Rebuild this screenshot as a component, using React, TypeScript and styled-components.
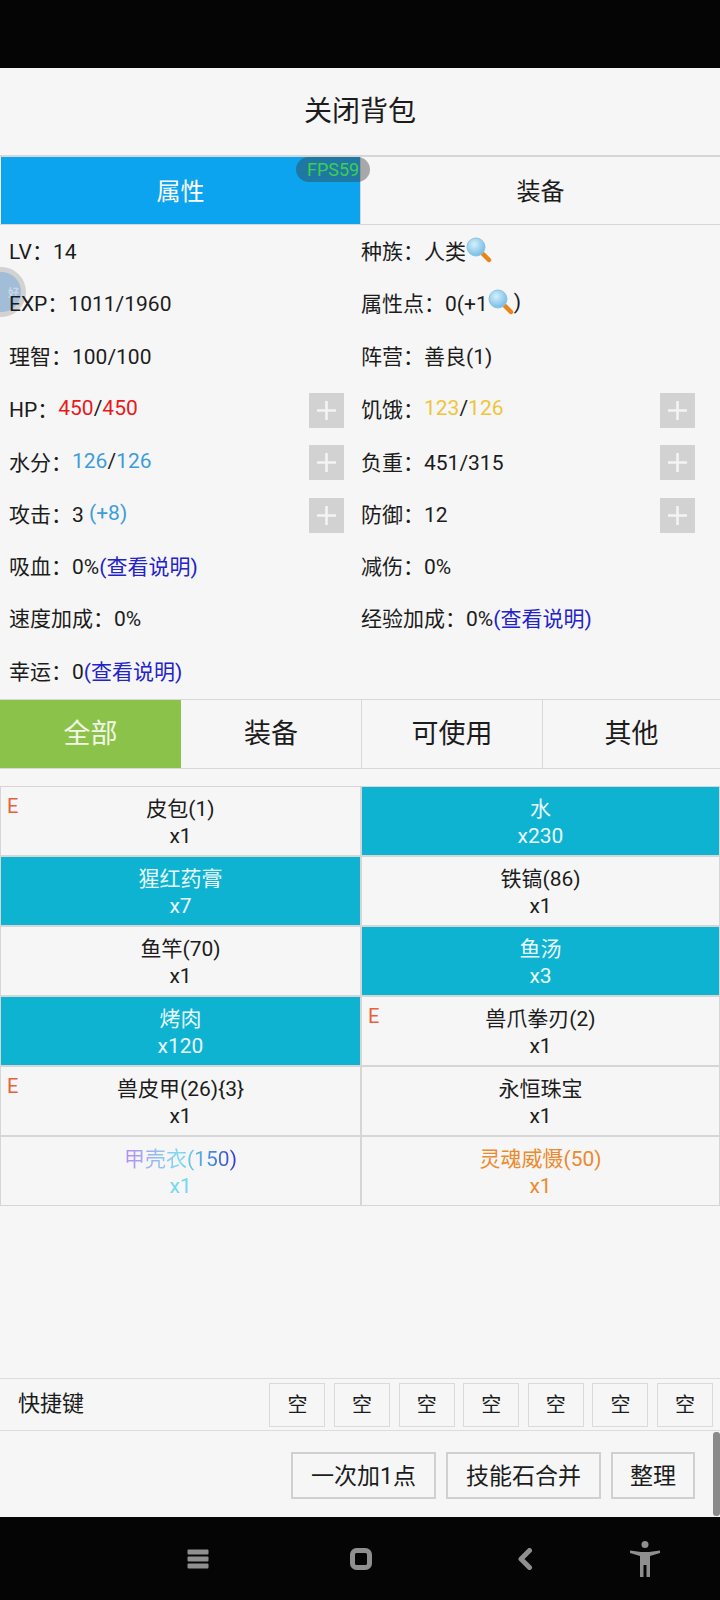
import React from 'react';
import styled, { createGlobalStyle } from 'styled-components';

const GlobalStyle = createGlobalStyle`
  html, body {
    margin: 0;
    padding: 0;
    background: #000;
  }
  * {
    box-sizing: border-box;
  }
`;

const Page = styled.div`
  position: relative;
  width: 720px;
  height: 1600px;
  display: flex;
  flex-direction: column;
  overflow: hidden;
  background: #f6f6f6;
  color: #1c1c1c;
  font-family: Roboto, 'Noto Sans CJK SC', sans-serif;
  font-size: 21px;
`;

const BlackBar = styled.div<{ $height: number }>`
  flex: none;
  height: ${props => props.$height}px;
  background: #050505;
`;

const NavBar = styled(BlackBar)`
  display: flex;
  align-items: center;
  color: #8f8f8f;
`;

const NavIcon = styled.svg<{ $left: number }>`
  flex: none;
  margin-left: ${props => props.$left}px;
`;

const Main = styled.div`
  position: relative;
  z-index: 1;
  flex: 1;
  display: flex;
  flex-direction: column;
  min-height: 0;
`;

const Title = styled.div`
  height: 87px;
  display: flex;
  align-items: center;
  justify-content: center;
  font-size: 28px;
  padding-bottom: 5px;
`;

const TopTabs = styled.div`
  display: grid;
  grid-template-columns: 360px 360px;
  height: 70px;
  border-top: 2px solid #d6d6d6;
  border-bottom: 1px solid #d6d6d6;
`;

const TopTab = styled.div<{ $active?: boolean }>`
  display: flex;
  align-items: center;
  justify-content: center;
  font-size: 24px;
  padding-bottom: 2px;
  color: ${props => (props.$active ? '#fff' : '#1c1c1c')};
  background: ${props => (props.$active ? '#0ca4ee' : 'transparent')};
  margin-left: ${props => (props.$active ? '1px' : '0')};
  border-left: ${props => (props.$active ? 'none' : '1px solid #d6d6d6')};
`;

const Stats = styled.div`
  display: grid;
  grid-template-columns: 352px 1fr;
  grid-auto-rows: 52.5px;
  padding-left: 9px;
  height: 474px;
`;

const Stat = styled.div`
  display: flex;
  align-items: center;
  justify-content: space-between;
  padding-right: 17px;
  &:nth-child(even) {
    padding-right: 25px;
  }
`;

const StatText = styled.span<{ $plus?: boolean }>`
  display: inline-flex;
  align-items: center;
  white-space: pre;
  padding-bottom: ${props => (props.$plus ? '1px' : '3px')};
`;

const Tone = styled.span<{ $color: string }>`
  color: ${props => props.$color};
`;

const PlusButton = styled.div`
  width: 35px;
  height: 35px;
  margin-top: 3px;
  background: #d2d2d2;
  color: #f4f4f4;
  display: flex;
  align-items: center;
  justify-content: center;
`;

const FilterTabs = styled.div`
  display: grid;
  grid-template-columns: 181px 180px 181px 178px;
  height: 70px;
  border-top: 1px solid #d8d8d8;
  border-bottom: 1px solid #d8d8d8;
`;

const FilterTab = styled.div<{ $active?: boolean }>`
  display: flex;
  align-items: center;
  justify-content: center;
  font-size: 27px;
  padding-bottom: 5px;
  color: ${props => (props.$active ? '#f2f7e8' : '#1c1c1c')};
  background: ${props => (props.$active ? '#8bc34a' : 'transparent')};
  border-left: ${props => (props.$active ? 'none' : '1px solid #d8d8d8')};
  &:nth-child(2) {
    border-left: none;
  }
`;

const Items = styled.div`
  margin-top: 17px;
  display: grid;
  grid-template-columns: 361px 359px;
  grid-auto-rows: 70px;
`;

const Item = styled.div<{ $filled?: boolean }>`
  position: relative;
  display: flex;
  flex-direction: column;
  align-items: center;
  justify-content: center;
  line-height: 27px;
  padding-top: 3px;
  border: 1px solid #d6d6d6;
  color: ${props => (props.$filled ? '#eafaff' : '#1c1c1c')};
  background: ${props => (props.$filled ? '#0db3d1' : 'transparent')};
`;

const EquipMark = styled.span`
  position: absolute;
  left: 6px;
  top: 6px;
  color: #e8603a;
  font-size: 20px;
  line-height: 27px;
`;

const GradientName = styled.span`
  background: linear-gradient(90deg, #b48cf0 0%, #7fdcf0 50%, #4a9fe0 72%, #3a3ad0 100%);
  -webkit-background-clip: text;
  background-clip: text;
  color: transparent;
`;

const CyanCount = styled.span`
  color: #75d8f0;
`;

const OrangeText = styled.span`
  color: #ec8a2e;
`;

const Spacer = styled.div`
  flex: 1;
`;

const ShortcutBar = styled.div`
  height: 53px;
  border-top: 1px solid #dcdcdc;
  border-bottom: 1px solid #dcdcdc;
  display: flex;
  align-items: center;
  padding: 0 7px 0 18px;
`;

const ShortcutLabel = styled.div`
  font-size: 22px;
  margin-right: auto;
  padding-bottom: 8px;
`;

const Slots = styled.div`
  display: flex;
  gap: 8.6px;
`;

const Slot = styled.div`
  width: 56px;
  height: 44px;
  border: 1px solid #dadada;
  font-size: 20px;
  padding-bottom: 2px;
  display: flex;
  align-items: center;
  justify-content: center;
`;

const Actions = styled.div`
  height: 86px;
  display: flex;
  justify-content: flex-end;
  align-items: flex-start;
  gap: 10px;
  padding: 21px 25px 0 0;
`;

const ActionButton = styled.div<{ $width: number }>`
  width: ${props => props.$width}px;
  height: 47px;
  border: 2px solid #d0d0d0;
  display: flex;
  align-items: center;
  justify-content: center;
  font-size: 23px;
  padding-bottom: 3px;
`;

const ScrollThumb = styled.div`
  position: absolute;
  z-index: 2;
  right: 0;
  top: 1432px;
  width: 7px;
  height: 84px;
  border-radius: 3px;
  background: #8a8a8a;
`;

const FpsBadge = styled.div`
  position: absolute;
  z-index: 2;
  left: 296px;
  top: 157px;
  width: 74px;
  height: 25px;
  padding-left: 11px;
  border-radius: 13px;
  background: rgba(60, 60, 60, 0.42);
  color: #3ccf4e;
  font-size: 18px;
  line-height: 25px;
`;

const FloatBall = styled.div`
  position: absolute;
  left: -24px;
  top: 267px;
  width: 50px;
  height: 50px;
  padding-right: 2px;
  border-radius: 50%;
  border: 5px solid #d2d2d2;
  background: #a2bdd8;
  color: #c8d8e8;
  font-size: 11px;
  font-weight: 700;
  display: flex;
  align-items: center;
  justify-content: flex-end;
`;

const Magnifier = () => (
  <svg width="26" height="26" viewBox="0 0 26 26">
    <defs>
      <radialGradient id="lens" cx="0.4" cy="0.35" r="0.7">
        <stop offset="0" stopColor="#d4f0fa" />
        <stop offset="1" stopColor="#6fb9e6" />
      </radialGradient>
    </defs>
    <line x1="15" y1="15" x2="23" y2="23" stroke="#e8841a" strokeWidth="4.5" strokeLinecap="round" />
    <circle cx="10" cy="10" r="9" fill="url(#lens)" stroke="#8cc4e2" strokeWidth="1" />
  </svg>
);

const Plus = () => (
  <svg width="21" height="21" viewBox="0 0 21 21">
    <path d="M10.5 1v19M1 10.5h19" stroke="currentColor" strokeWidth="2.6" />
  </svg>
);

const Link = styled.span`
  color: #2323c8;
`;

type ItemData = {
  name: React.ReactNode;
  count: React.ReactNode;
  filled?: boolean;
  equipped?: boolean;
};

const items: ItemData[] = [
  { name: '皮包(1)', count: 'x1', equipped: true },
  { name: '水', count: 'x230', filled: true },
  { name: '猩红药膏', count: 'x7', filled: true },
  { name: '铁镐(86)', count: 'x1' },
  { name: '鱼竿(70)', count: 'x1' },
  { name: '鱼汤', count: 'x3', filled: true },
  { name: '烤肉', count: 'x120', filled: true },
  { name: '兽爪拳刃(2)', count: 'x1', equipped: true },
  { name: '兽皮甲(26){3}', count: 'x1', equipped: true },
  { name: '永恒珠宝', count: 'x1' },
  { name: <GradientName>甲壳衣(150)</GradientName>, count: <CyanCount>x1</CyanCount> },
  { name: <OrangeText>灵魂威慑(50)</OrangeText>, count: <OrangeText>x1</OrangeText> },
];

const RED = '#e8191c';
const YELLOW = '#f0c53c';
const BLUE = '#3d9ddc';

const stats: { text: React.ReactNode; plus?: boolean }[] = [
  { text: 'LV：14' },
  { text: <>种族：人类<Magnifier /></> },
  { text: 'EXP：1011/1960' },
  { text: <>属性点：0(+1<Magnifier />)</> },
  { text: '理智：100/100' },
  { text: '阵营：善良(1)' },
  { text: <>HP：<Tone $color={RED}>450</Tone>/<Tone $color={RED}>450</Tone></>, plus: true },
  { text: <>饥饿：<Tone $color={YELLOW}>123</Tone>/<Tone $color={YELLOW}>126</Tone></>, plus: true },
  { text: <>水分：<Tone $color={BLUE}>126</Tone>/<Tone $color={BLUE}>126</Tone></>, plus: true },
  { text: '负重：451/315', plus: true },
  { text: <>攻击：3 <Tone $color={BLUE}>(+8)</Tone></>, plus: true },
  { text: '防御：12', plus: true },
  { text: <>吸血：0%<Link>(查看说明)</Link></> },
  { text: '减伤：0%' },
  { text: '速度加成：0%' },
  { text: <>经验加成：0%<Link>(查看说明)</Link></> },
  { text: <>幸运：0<Link>(查看说明)</Link></> },
];

export default function App() {
  return (
    <Page>
      <GlobalStyle />
      <BlackBar $height={68} />
      <Main>
        <Title>关闭背包</Title>
        <TopTabs>
          <TopTab $active>属性</TopTab>
          <TopTab>装备</TopTab>
        </TopTabs>
        <Stats>
          {stats.map((stat, i) => (
            <Stat key={i}>
              <StatText $plus={stat.plus}>{stat.text}</StatText>
              {stat.plus && (
                <PlusButton>
                  <Plus />
                </PlusButton>
              )}
            </Stat>
          ))}
        </Stats>
        <FilterTabs>
          <FilterTab $active>全部</FilterTab>
          <FilterTab>装备</FilterTab>
          <FilterTab>可使用</FilterTab>
          <FilterTab>其他</FilterTab>
        </FilterTabs>
        <Items>
          {items.map((item, i) => (
            <Item key={i} $filled={item.filled}>
              {item.equipped && <EquipMark>E</EquipMark>}
              <span>{item.name}</span>
              <span>{item.count}</span>
            </Item>
          ))}
        </Items>
        <Spacer />
        <ShortcutBar>
          <ShortcutLabel>快捷键</ShortcutLabel>
          <Slots>
            {Array.from({ length: 7 }, (_, i) => (
              <Slot key={i}>空</Slot>
            ))}
          </Slots>
        </ShortcutBar>
        <Actions>
          <ActionButton $width={145}>一次加1点</ActionButton>
          <ActionButton $width={155}>技能石合并</ActionButton>
          <ActionButton $width={84}>整理</ActionButton>
        </Actions>
      </Main>
      <NavBar $height={83}>
        <NavIcon $left={187} width="22" height="20" viewBox="0 0 22 20">
          <rect x="0.5" y="0.5" width="21" height="5" rx="1" fill="currentColor" />
          <rect x="0.5" y="7.5" width="21" height="5" rx="1" fill="currentColor" />
          <rect x="0.5" y="14.5" width="21" height="5" rx="1" fill="currentColor" />
        </NavIcon>
        <NavIcon $left={141} width="22" height="22" viewBox="0 0 22 22">
          <rect x="2.500" y="2.500" width="17" height="17" rx="4" fill="none" stroke="currentColor" strokeWidth="5" />
        </NavIcon>
        <NavIcon $left={145} width="16" height="22" viewBox="0 0 16 22">
          <path d="M12.5 2.500L4 11l8.500 8.500" fill="none" stroke="currentColor" strokeWidth="5" strokeLinecap="round" strokeLinejoin="round" />
        </NavIcon>
        <NavIcon $left={96} width="32" height="36" viewBox="0 0 32 36">
          <circle cx="16" cy="3.500" r="3.500" fill="currentColor" />
          <path d="M1 9.500L12 11h8l11-1.500v2.500L21 15v21h-3.500V24h-3v12H11V15L1 12z" fill="currentColor" />
        </NavIcon>
      </NavBar>
      <FpsBadge>FPS59</FpsBadge>
      <FloatBall>好</FloatBall>
      <ScrollThumb />
    </Page>
  );
}
